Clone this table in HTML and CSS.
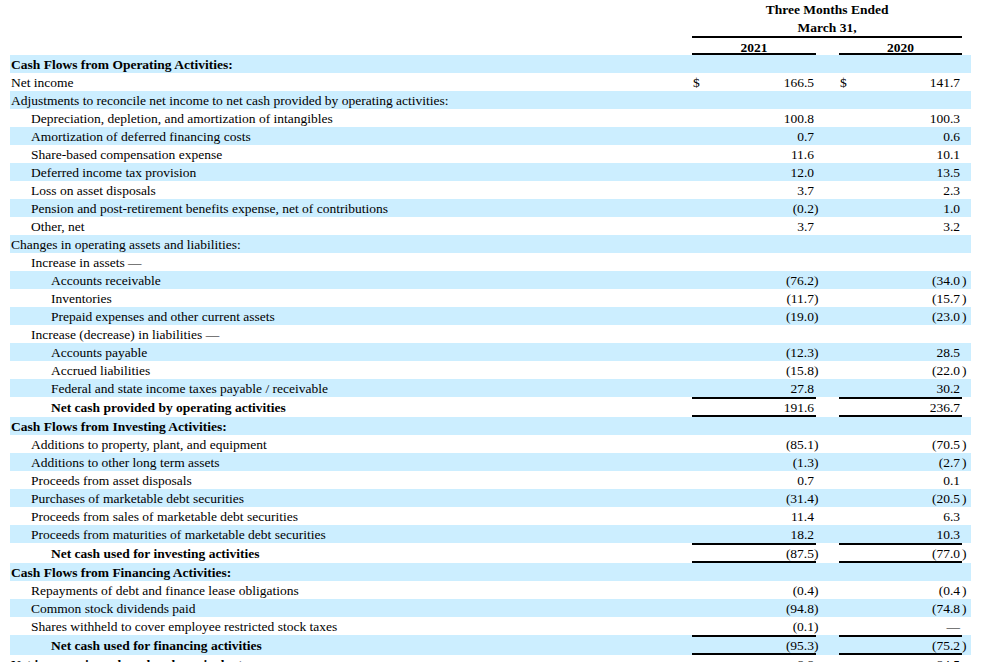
FILE: index.html
```
<!DOCTYPE html>
<html lang="en">
<head>
<meta charset="utf-8">
<title>Condensed Consolidated Statements of Cash Flows</title>
<link rel="stylesheet" href="styles.css">
</head>
<body>
<table class="cf">
  <colgroup>
    <col class="c-lbl"><col class="c-cur"><col class="c-num"><col class="c-par"><col class="c-gap"><col class="c-cur"><col class="c-num2"><col class="c-par2">
  </colgroup>
  <thead>
    <tr class="h1"><td></td><td class="hc" colspan="6">Three Months Ended</td><td></td></tr>
    <tr class="h2"><td></td><td class="hc rule" colspan="6">March 31,</td><td></td></tr>
    <tr class="h3"><td></td><td class="hc rule" colspan="2">2021</td><td></td><td></td><td class="hc rule" colspan="2">2020</td><td></td></tr>
  </thead>
  <tbody>
    <tr><td class="lbl b">Cash Flows from Operating Activities:</td><td></td><td></td><td></td><td></td><td></td><td></td><td></td></tr>
    <tr><td class="lbl">Net income</td><td class="cur">$</td><td class="num">166.5</td><td></td><td></td><td class="cur">$</td><td class="num">141.7</td><td></td></tr>
    <tr><td class="lbl">Adjustments to reconcile net income to net cash provided by operating activities:</td><td></td><td></td><td></td><td></td><td></td><td></td><td></td></tr>
    <tr><td class="lbl i1">Depreciation, depletion, and amortization of intangibles</td><td></td><td class="num">100.8</td><td></td><td></td><td></td><td class="num">100.3</td><td></td></tr>
    <tr><td class="lbl i1">Amortization of deferred financing costs</td><td></td><td class="num">0.7</td><td></td><td></td><td></td><td class="num">0.6</td><td></td></tr>
    <tr><td class="lbl i1">Share-based compensation expense</td><td></td><td class="num">11.6</td><td></td><td></td><td></td><td class="num">10.1</td><td></td></tr>
    <tr><td class="lbl i1">Deferred income tax provision</td><td></td><td class="num">12.0</td><td></td><td></td><td></td><td class="num">13.5</td><td></td></tr>
    <tr><td class="lbl i1">Loss on asset disposals</td><td></td><td class="num">3.7</td><td></td><td></td><td></td><td class="num">2.3</td><td></td></tr>
    <tr><td class="lbl i1">Pension and post-retirement benefits expense, net of contributions</td><td></td><td class="num">(0.2</td><td class="par1"><span>)</span></td><td></td><td></td><td class="num">1.0</td><td></td></tr>
    <tr><td class="lbl i1">Other, net</td><td></td><td class="num">3.7</td><td></td><td></td><td></td><td class="num">3.2</td><td></td></tr>
    <tr><td class="lbl">Changes in operating assets and liabilities:</td><td></td><td></td><td></td><td></td><td></td><td></td><td></td></tr>
    <tr><td class="lbl i1">Increase in assets —</td><td></td><td></td><td></td><td></td><td></td><td></td><td></td></tr>
    <tr><td class="lbl i2">Accounts receivable</td><td></td><td class="num">(76.2</td><td class="par1"><span>)</span></td><td></td><td></td><td class="num">(34.0</td><td class="par2">)</td></tr>
    <tr><td class="lbl i2">Inventories</td><td></td><td class="num">(11.7</td><td class="par1"><span>)</span></td><td></td><td></td><td class="num">(15.7</td><td class="par2">)</td></tr>
    <tr><td class="lbl i2">Prepaid expenses and other current assets</td><td></td><td class="num">(19.0</td><td class="par1"><span>)</span></td><td></td><td></td><td class="num">(23.0</td><td class="par2">)</td></tr>
    <tr><td class="lbl i1">Increase (decrease) in liabilities —</td><td></td><td></td><td></td><td></td><td></td><td></td><td></td></tr>
    <tr><td class="lbl i2">Accounts payable</td><td></td><td class="num">(12.3</td><td class="par1"><span>)</span></td><td></td><td></td><td class="num">28.5</td><td></td></tr>
    <tr><td class="lbl i2">Accrued liabilities</td><td></td><td class="num">(15.8</td><td class="par1"><span>)</span></td><td></td><td></td><td class="num">(22.0</td><td class="par2">)</td></tr>
    <tr><td class="lbl i2">Federal and state income taxes payable / receivable</td><td></td><td class="num">27.8</td><td></td><td></td><td></td><td class="num">30.2</td><td></td></tr>
    <tr class="tot"><td class="lbl i2 b">Net cash provided by operating activities</td><td class="ln"></td><td class="num ln">191.6</td><td></td><td></td><td class="ln"></td><td class="num ln">236.7</td><td></td></tr>
    <tr><td class="lbl b">Cash Flows from Investing Activities:</td><td></td><td></td><td></td><td></td><td></td><td></td><td></td></tr>
    <tr><td class="lbl i1">Additions to property, plant, and equipment</td><td></td><td class="num">(85.1</td><td class="par1"><span>)</span></td><td></td><td></td><td class="num">(70.5</td><td class="par2">)</td></tr>
    <tr><td class="lbl i1">Additions to other long term assets</td><td></td><td class="num">(1.3</td><td class="par1"><span>)</span></td><td></td><td></td><td class="num">(2.7</td><td class="par2">)</td></tr>
    <tr><td class="lbl i1">Proceeds from asset disposals</td><td></td><td class="num">0.7</td><td></td><td></td><td></td><td class="num">0.1</td><td></td></tr>
    <tr><td class="lbl i1">Purchases of marketable debt securities</td><td></td><td class="num">(31.4</td><td class="par1"><span>)</span></td><td></td><td></td><td class="num">(20.5</td><td class="par2">)</td></tr>
    <tr><td class="lbl i1">Proceeds from sales of marketable debt securities</td><td></td><td class="num">11.4</td><td></td><td></td><td></td><td class="num">6.3</td><td></td></tr>
    <tr><td class="lbl i1">Proceeds from maturities of marketable debt securities</td><td></td><td class="num">18.2</td><td></td><td></td><td></td><td class="num">10.3</td><td></td></tr>
    <tr class="tot"><td class="lbl i2 b">Net cash used for investing activities</td><td class="ln"></td><td class="num ln">(87.5</td><td class="par1"><span>)</span></td><td></td><td class="ln"></td><td class="num ln">(77.0</td><td class="par2">)</td></tr>
    <tr><td class="lbl b">Cash Flows from Financing Activities:</td><td></td><td></td><td></td><td></td><td></td><td></td><td></td></tr>
    <tr><td class="lbl i1">Repayments of debt and finance lease obligations</td><td></td><td class="num">(0.4</td><td class="par1"><span>)</span></td><td></td><td></td><td class="num">(0.4</td><td class="par2">)</td></tr>
    <tr><td class="lbl i1">Common stock dividends paid</td><td></td><td class="num">(94.8</td><td class="par1"><span>)</span></td><td></td><td></td><td class="num">(74.8</td><td class="par2">)</td></tr>
    <tr><td class="lbl i1">Shares withheld to cover employee restricted stock taxes</td><td></td><td class="num">(0.1</td><td class="par1"><span>)</span></td><td></td><td></td><td class="num">—</td><td></td></tr>
    <tr class="tot"><td class="lbl i2 b">Net cash used for financing activities</td><td class="ln"></td><td class="num ln">(95.3</td><td class="par1"><span>)</span></td><td></td><td class="ln"></td><td class="num ln">(75.2</td><td class="par2">)</td></tr>
    <tr><td class="lbl b">Net increase in cash and cash equivalents</td><td></td><td class="num">8.8</td><td></td><td></td><td></td><td class="num">84.5</td><td></td></tr>
  </tbody>
</table>
</body>
</html>
```
FILE: styles.css
```
html, body {
  margin: 0;
  padding: 0;
  background: #ffffff;
}

body {
  font-family: "Liberation Serif", "Times New Roman", serif;
  font-size: 13.5px;
  color: #000000;
}

.cf {
  margin-left: 10px;
  width: 961px;
  table-layout: fixed;
  border-collapse: separate;
  border-spacing: 0;
}

.c-lbl { width: 682px; }
.c-cur { width: 10px; }
.c-num { width: 114px; }
.c-par { width: 7px; }
.c-gap { width: 16px; }
.c-num2 { width: 113px; }
.c-par2 { width: 9px; }

.cf td {
  padding: 0;
  line-height: 18px;
  white-space: nowrap;
  vertical-align: middle;
  overflow: visible;
}

.cf tbody td {
  padding-top: 1px;
  line-height: 17px;
}

.cf tbody tr:nth-child(odd) {
  background: #cceeff;
}

.h1 td { line-height: 19px; }
.h2 td { line-height: 17px; }
.cf .h3 td {
  padding-top: 4px;
  line-height: 11px;
}

.hc {
  text-align: center;
  font-weight: bold;
}

.rule {
  border-bottom: 2px solid #000000;
}

.cf td.lbl { padding-left: 1px; }
.cf td.i1 { padding-left: 21px; }
.cf td.i2 { padding-left: 41px; }

.b { font-weight: bold; }

.cf td.num {
  text-align: right;
  padding-right: 2px;
}

.cf td.cur {
  padding-left: 1px;
}

.par1 span {
  display: inline-block;
  margin-left: -2px;
}

.cf .tot td.ln {
  border-top: 2px solid #000000;
  border-bottom: 2px solid #000000;
  line-height: 15px;
}
```
